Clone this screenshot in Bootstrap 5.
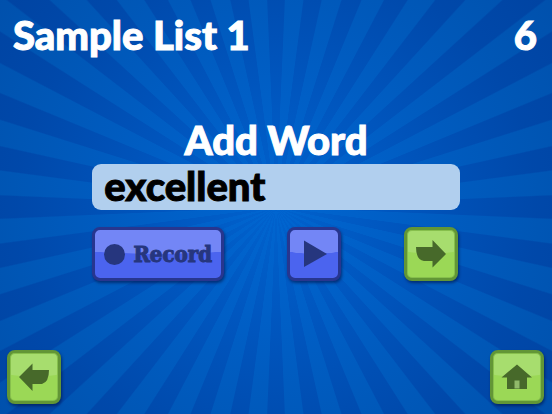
<!DOCTYPE html>
<html lang="en">
<head>
<meta charset="utf-8">
<meta name="viewport" content="width=device-width, initial-scale=1">
<title>Add Word</title>
<link rel="stylesheet" href="https://cdn.jsdelivr.net/npm/bootstrap@5.3.0/dist/css/bootstrap.min.css">
<style>
  body {
    font-family: Lato, "Open Sans", sans-serif;
    background:
      radial-gradient(circle at 50% 50%, rgba(0, 105, 215, .8) 0, rgba(0, 102, 214, .46) 35%, rgba(0, 75, 170, .12) 75%, rgba(0, 50, 130, .2) 100%),
      repeating-conic-gradient(from 0deg at 50% 50%, #0048aa 0 2.3deg, #0058b7 2.6deg 7.4deg, #0048aa 7.7deg 10deg);
  }
  .title-text { font-size: 40px; line-height: 40px; font-weight: 900; color: #fff; -webkit-text-stroke: 1px currentColor; }
  .page-head { padding: 15px 15px 0 13px; }
  .word-form { width: 66.6%; padding-bottom: 4px; }
  .word-input {
    height: 46px; padding: 0 12px 2px; border: 0; border-radius: 9px;
    background: #b1cfee; color: #000; font-size: 40px; font-weight: 900; -webkit-text-stroke: 1px currentColor;
  }
  .word-input:focus { background: #b1cfee; color: #000; }
  .word-actions { padding: 17px 2px 0 0; }
  .glossy {
    height: 54px; min-width: 54px; padding: 0; border-radius: 8px;
    box-shadow: 1px 2px 3px rgba(0, 20, 70, .6);
  }
  .glossy-blue, .glossy-blue:hover {
    border: 3px solid #27368f; color: #26367e;
    background: radial-gradient(ellipse 130% 50% at 50% 0, #7386f6 98%, transparent 100%), #4b64ef;
  }
  .glossy-green, .glossy-green:hover {
    border: 3px solid #629636; color: #47692a;
    background: radial-gradient(ellipse 130% 50% at 50% 0, #a7dd6e 96%, transparent 100%), #9bd856;
    box-shadow: inset 0 0 0 1px #86bf4c, 1px 2px 3px rgba(0, 20, 70, .6);
  }
  .record-btn { width: 132px; }
  .record-label { font-family: "DejaVu Serif Condensed", "DejaVu Serif", serif; font-size: 22px; line-height: 24px; font-weight: 700; -webkit-text-stroke: 1px currentColor; }
  .page-foot { padding: 0 8px 10px 7px; }
</style>
</head>
<body>
<div class="min-vh-100 d-flex flex-column">
  <header class="page-head d-flex justify-content-between">
    <h1 class="title-text m-0">Sample List 1</h1>
    <span class="title-text">6</span>
  </header>

  <main class="flex-grow-1 d-flex justify-content-center align-items-center">
    <form class="word-form" onsubmit="return false">
      <label for="word" class="title-text d-block text-center mb-1">Add Word</label>
      <input id="word" class="word-input form-control" type="text" value="excellent" spellcheck="false" autocomplete="off">
      <div class="word-actions d-flex justify-content-between">
        <button type="button" class="btn glossy glossy-blue record-btn d-flex align-items-center justify-content-center gap-2">
          <svg width="21" height="21" viewBox="0 0 21 21" aria-hidden="true"><circle cx="10.5" cy="10.5" r="10.5" fill="currentColor"/></svg>
          <span class="record-label">Record</span>
        </button>
        <button type="button" class="btn glossy glossy-blue d-flex align-items-center justify-content-center" aria-label="Play">
          <svg width="48" height="48" viewBox="0 0 48 48" aria-hidden="true"><path d="M14 10.500V37L37 24Z" fill="currentColor"/></svg>
        </button>
        <button type="submit" class="btn glossy glossy-green d-flex align-items-center justify-content-center" aria-label="Next">
          <svg width="48" height="48" viewBox="0 0 48 48" aria-hidden="true"><path d="M9 17H25.500V10L39 24L25.500 37.500V31H17Q9 30 9 17Z" fill="currentColor"/></svg>
        </button>
      </div>
    </form>
  </main>

  <footer class="page-foot d-flex justify-content-between">
    <button type="button" class="btn glossy glossy-green d-flex align-items-center justify-content-center" aria-label="Back">
      <svg width="48" height="48" viewBox="0 0 48 48" aria-hidden="true"><path d="M39 17H22.500V10.500L9 24L22.500 38V31H32Q39 29 39 17Z" fill="currentColor"/></svg>
    </button>
    <button type="button" class="btn glossy glossy-green d-flex align-items-center justify-content-center" aria-label="Home">
      <svg width="48" height="48" viewBox="0 0 48 48" aria-hidden="true"><path d="M24 11.500L39 24.500H34V36H14V24.500H8.500Z" fill="currentColor"/><path d="M21.500 27.500H26.500V35.500H21.500Z" fill="#91b96a"/></svg>
    </button>
  </footer>
</div>
<script src="https://cdn.jsdelivr.net/npm/bootstrap@5.3.0/dist/js/bootstrap.bundle.min.js"></script>
</body>
</html>
